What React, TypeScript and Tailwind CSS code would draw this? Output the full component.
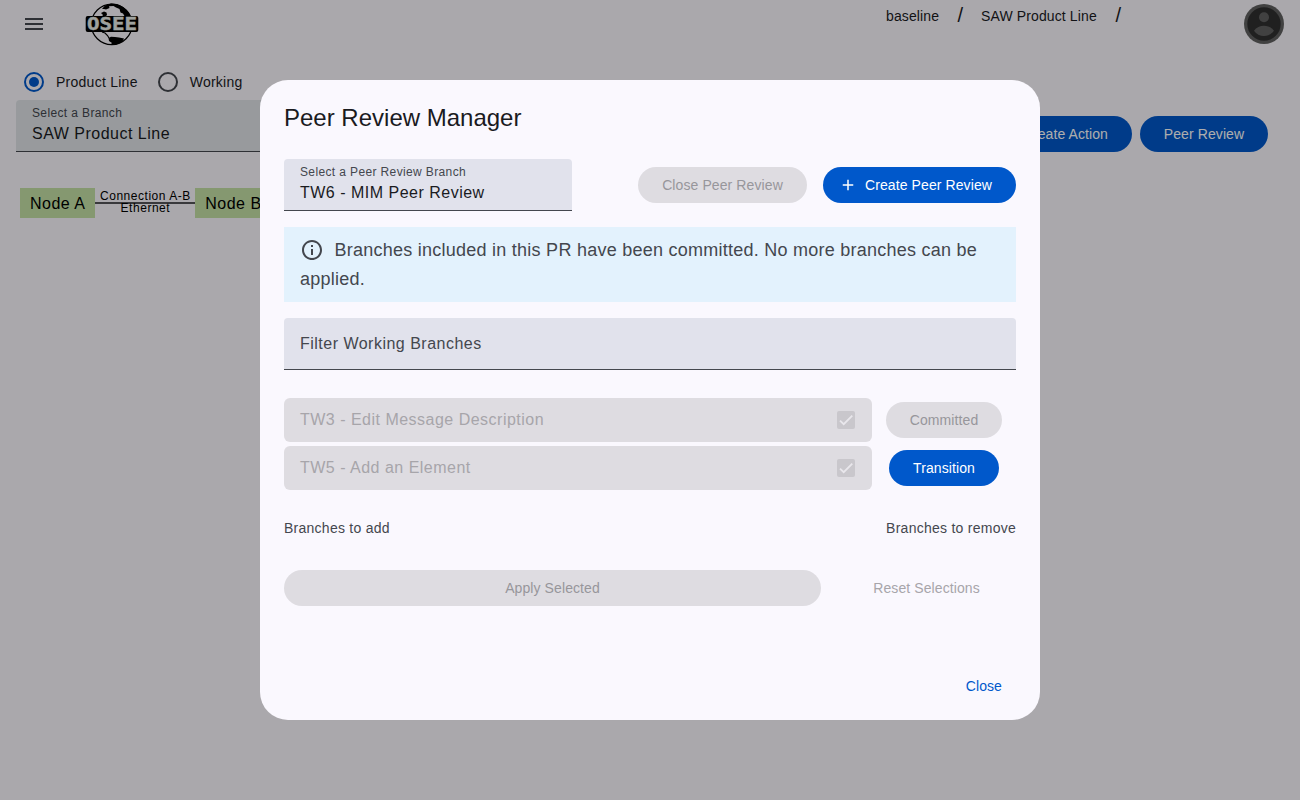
import type { ReactNode } from 'react';

function OseeLogo() {
  return (
    <svg width="56" height="46" viewBox="84 1 56 46" className="block shrink-0" role="img">
      <circle cx="111.7" cy="24.4" r="20.3" fill="none" stroke="#000" strokeWidth="1.2" />
      <path
        d="M102 9 L105 5.500 L111 3.600 L117 4 L123 7 L128 11.500 L131 17 L125 17 L123 13.500 L120.500 12.500 L119.500 9 L116 7.500 L113.500 6 L109 6.300 L109.500 8 L106 9.500 L104 9 Z"
        fill="#000"
      />
      <path d="M101 13 L104 11.500 L106.500 12.500 L107 15 L105 17 L101.500 17 L103 15 Z" fill="#000" />
      <path d="M102 32 L105 33 L107.500 35.500 L109 38" fill="none" stroke="#000" strokeWidth="1.2" />
      <path
        d="M108.500 38 L111 36.800 L115 37 L119 37.500 L124 38.500 L122.500 41.500 L119 43.500 L115 45 L110 45 L112 43 L109 41 Z"
        fill="#000"
      />
      <rect x="85.700" y="16" width="52.600" height="16" rx="2" fill="#000" />
      <text
        x="87"
        y="30.300"
        textLength="50"
        lengthAdjust="spacingAndGlyphs"
        fill="#e9ede9"
        stroke="#e9ede9"
        strokeWidth="0.400"
        className="font-['DejaVu_Sans_Mono'] text-[17.500px] font-bold"
      >
        OSEE
      </text>
    </svg>
  );
}

function Radio({ label, checked }: { label: string; checked?: boolean }) {
  return (
    <label className="flex items-center">
      <span
        className={
          checked
            ? 'flex size-5 items-center justify-center rounded-full border-2 border-[#0058cb]'
            : 'flex size-5 items-center justify-center rounded-full border-2 border-[#44474e]'
        }
      >
        {checked && <span className="size-2.5 rounded-full bg-[#0058cb]" />}
      </span>
      <span className="ml-3 text-sm leading-5 tracking-[0.256px] text-[#1a1b1f]">{label}</span>
    </label>
  );
}

function SelectField({ label, value, className }: { label: string; value: string; className: string }) {
  return (
    <div className={`h-[52px] shrink-0 rounded-t border-b border-[#44474e] px-4 ${className}`}>
      <div className="pt-[5px] text-xs leading-[17px] tracking-[0.370px] text-[#44474e]">{label}</div>
      <div className="text-base leading-6 tracking-[0.496px] text-[#1a1b1f]">{value}</div>
    </div>
  );
}

function Pill({ children, disabled, className = '' }: { children: ReactNode; disabled?: boolean; className?: string }) {
  return (
    <button
      disabled={disabled}
      className={`flex h-9 items-center justify-center rounded-full text-sm tracking-[0.096px] ${
        disabled ? 'bg-[#dedce1] text-[#97969b]' : 'bg-[#0058cb] text-white'
      } ${className}`}
    >
      {children}
    </button>
  );
}

function BranchRow({ name, action }: { name: string; action: ReactNode }) {
  return (
    <div className="flex h-12 items-center">
      <div className="flex h-11 w-[588px] items-center justify-between rounded-md bg-[#dedce1] pr-[17px] pl-4">
        <span className="text-base leading-6 tracking-[0.490px] text-[#a7a5aa]">{name}</span>
        <span className="flex size-[18px] items-center justify-center rounded-xs bg-[#c9c7cc]">
          <svg width="14" height="14" viewBox="0 0 24 24">
            <path d="M1.730 12.910 8.100 19.280 22.790 4.590" fill="none" stroke="#e9e7ec" strokeWidth="3.100" />
          </svg>
        </span>
      </div>
      <div className="flex w-36 justify-center">{action}</div>
    </div>
  );
}

function Page() {
  return (
    <div className="h-[800px] overflow-hidden bg-[#fbf8fe]">
      <header className="flex h-12 items-start justify-between">
        <div className="flex">
          <button className="flex h-12 w-[68px] items-center justify-center">
            <svg width="24" height="24" viewBox="0 0 24 24" fill="#44474e">
              <path d="M3 18h18v-2H3v2zm0-5h18v-2H3v2zm0-7v2h18V6H3z" />
            </svg>
          </button>
          <div className="ml-4 pt-px">
            <OseeLogo />
          </div>
        </div>
        <div className="flex">
          <nav className="flex h-8 w-[358px] items-center text-sm leading-5 tracking-[0.120px] text-[#1a1b1f]">
            <span className="w-[71.500px]">baseline</span>
            <span className="w-[23.500px] pb-0.5 text-xl leading-5">/</span>
            <span className="w-[134.500px]">SAW Product Line</span>
            <span className="pb-0.5 text-xl leading-5">/</span>
          </nav>
          <svg width="40" height="40" viewBox="0 0 40 40" className="mt-1 mr-4">
            <circle cx="20" cy="20" r="20" fill="#616161" />
            <circle cx="20" cy="20" r="16.700" fill="#303030" />
            <circle cx="20" cy="13.300" r="5" fill="#616161" />
            <path d="M10 26.700c2.200-3.300 6.200-5 10-5s7.800 1.700 10 5c-2.200 3.300-6.200 5.300-10 5.300s-7.800-2-10-5.300Z" fill="#616161" />
          </svg>
        </div>
      </header>
      <main>
        <div className="flex gap-5 pt-6 pl-6">
          <Radio label="Product Line" checked />
          <Radio label="Working" />
        </div>
        <div className="mt-2 flex justify-between pr-8 pl-4">
          <SelectField label="Select a Branch" value="SAW Product Line" className="w-[400px] bg-[#e0e4e8]" />
          <div className="flex gap-2 pt-4">
            <Pill className="px-6">Create Action</Pill>
            <Pill className="w-32">Peer Review</Pill>
          </div>
        </div>
        <div className="mt-9 flex pl-5 text-base tracking-[0.496px] text-[#000]">
          <div className="h-[30px] w-[75.400px] bg-[#c5e1a5] text-center leading-8">Node A</div>
          <div className="relative w-[100px] text-center text-xs leading-3 tracking-[0.530px]">
            <div className="absolute inset-x-0 top-[14px] h-0.5 bg-[#555559]" />
            <div className="relative pt-0.5 whitespace-nowrap">Connection A-B</div>
            <div className="relative">Ethernet</div>
          </div>
          <div className="h-[30px] w-[76px] bg-[#c5e1a5] text-center leading-8">Node B</div>
        </div>
      </main>
    </div>
  );
}

function PeerReviewDialog() {
  return (
    <section
      role="dialog"
      className="flex h-[640px] w-[780px] flex-col rounded-[28px] bg-[#faf8fe] px-6 text-[#44474e]"
    >
      <h2 className="pt-[22px] text-2xl leading-8 text-[#1a1b1f]">Peer Review Manager</h2>
      <div className="mt-[25px] flex justify-between">
        <SelectField label="Select a Peer Review Branch" value="TW6 - MIM Peer Review" className="w-72 bg-[#e1e2ec]" />
        <div className="flex gap-4 pt-2">
          <Pill disabled className="w-[169px]">Close Peer Review</Pill>
          <Pill className="w-[193px] gap-2 pr-2">
            <svg width="18" height="18" viewBox="0 0 24 24" fill="currentColor">
              <path d="M19 13h-6v6h-2v-6H5v-2h6V5h2v6h6v2z" />
            </svg>
            Create Peer Review
          </Pill>
        </div>
      </div>
      <div className="mt-4 h-[75px] bg-[#e3f2fd] px-4 pt-[9px] text-lg leading-[29px] tracking-[0.250px]">
        <svg width="24" height="24" viewBox="0 0 24 24" fill="currentColor" className="mr-[10.500px] inline-block align-[-6px]">
          <path d="M11 7h2v2h-2zm0 4h2v6h-2zm1-9C6.480 2 2 6.480 2 12s4.480 10 10 10 10-4.480 10-10S17.520 2 12 2zm0 18c-4.410 0-8-3.590-8-8s3.590-8 8-8 8 3.590 8 8-3.590 8-8 8z" />
        </svg>
        Branches included in this PR have been committed. No more branches can be applied.
      </div>
      <div className="mt-4 flex h-[52px] items-center rounded-t border-b border-[#44474e] bg-[#e1e2ec] px-4 text-base tracking-[0.490px]">
        Filter Working Branches
      </div>
      <div className="mt-[26px]">
        <BranchRow name="TW3 - Edit Message Description" action={<Pill disabled className="w-[116px]">Committed</Pill>} />
        <BranchRow name="TW5 - Add an Element" action={<Pill className="w-[110px]">Transition</Pill>} />
      </div>
      <div className="mt-[26px] flex justify-between text-sm leading-5 tracking-[0.256px]">
        <span>Branches to add</span>
        <span>Branches to remove</span>
      </div>
      <div className="mt-8 flex items-center">
        <Pill disabled className="w-[537px]">Apply Selected</Pill>
        <button disabled className="ml-4 h-9 w-[179px] text-sm tracking-[0.096px] text-[#a7a5aa]">
          Reset Selections
        </button>
      </div>
      <div className="mt-[62px] flex justify-end">
        <button className="h-9 px-3.5 text-sm tracking-[0.096px] text-[#0058cb]">Close</button>
      </div>
    </section>
  );
}

export default function App() {
  return (
    <div className="font-['Liberation_Sans',Arial,sans-serif]">
      <Page />
      <div className="fixed inset-0 flex items-center justify-center bg-black/32">
        <PeerReviewDialog />
      </div>
    </div>
  );
}
